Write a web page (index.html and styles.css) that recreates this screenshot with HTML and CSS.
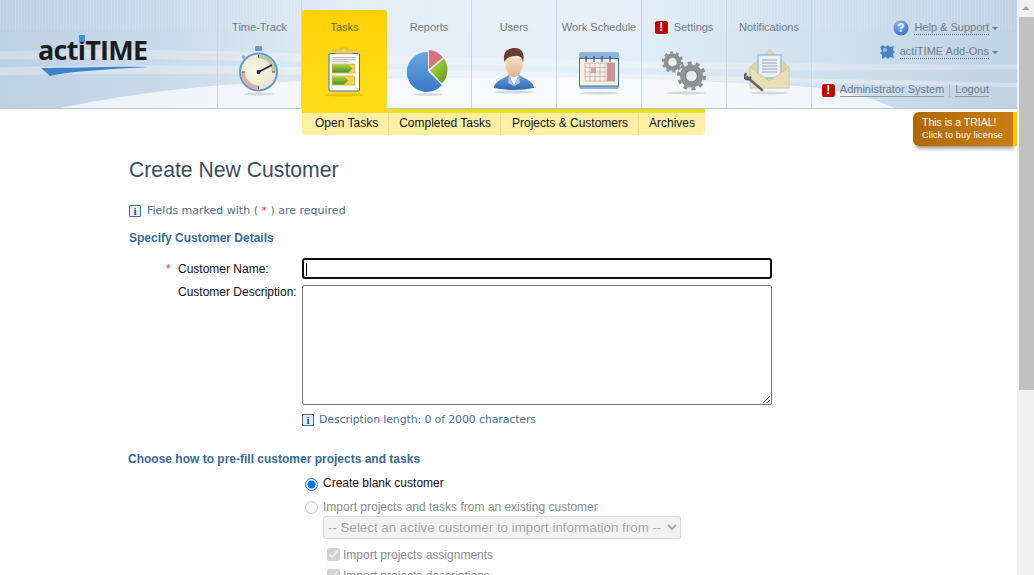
FILE: index.html
```html
<!DOCTYPE html>
<html>
  <head>
    <meta charset="utf-8" />

    <title>actiTIME - Create New Customer</title>

    <link rel="stylesheet" href="styles.css">
  </head>

  <body>
    <div id="app">
      <div class="viewport">
        <div class="topbar">
          <svg class="topbar-waves" viewBox="0 0 1017 109" preserveAspectRatio="none">
            <path d="M0 52 C200 44 500 66 1017 65 V70 C600 74 200 56 0 60 Z" fill="#ffffff" opacity="0.25"/>
            <path d="M0 68 C200 62 480 72 1017 84 V88 C560 78 200 72 0 76 Z" fill="#ffffff" opacity="0.3"/>
            <path d="M60 109 C130 95 200 85 300 82 C500 74 700 80 812 88 C850 92 875 100 895 109 Z" fill="#ffffff" opacity="0.7"/>
          </svg>

          <div class="logo">
            <div class="logo-text">act<span class="logo-i">i</span>TIME</div>
            <svg class="logo-swoosh" width="108" height="11" viewBox="0 0 108 11">
              <path d="M0 2 C30 2 70 0 107 1 C70 3 30 5 9 10 Z" fill="#3d83cf"/>
            </svg>
          </div>

          <nav class="tabs">
            <div class="tab">
              <div class="tab-label">Time-Track</div>
              <svg class="tab-icon" width="50" height="56" viewBox="0 0 50 56">
                <defs>
                  <radialGradient id="face" cx="0.45" cy="0.45" r="0.6">
                    <stop offset="0" stop-color="#fbf9ee"/>
                    <stop offset="1" stop-color="#e6e2c8"/>
                  </radialGradient>
                </defs>
                <ellipse cx="23.5" cy="48" rx="15" ry="1.5" fill="#b8c4d0" opacity="0.6"/>
                <rect x="20" y="0" width="7" height="5" rx="1" fill="#6d94c8"/>
                <circle cx="8.5" cy="11" r="1.8" fill="#8fb0da"/>
                <circle cx="23.5" cy="26" r="18.5" fill="url(#face)" stroke="#6496d2" stroke-width="2"/>
                <path d="M23.5 8.5 A17.5 17.5 0 0 1 41 26 L37 26 A13.5 13.5 0 0 0 23.5 12.5 Z" fill="#b5cc9a"/>
                <path d="M23.5 43.5 A17.5 17.5 0 0 1 6 26 L10 26 A13.5 13.5 0 0 0 23.5 39.5 Z" fill="#dfb0a2"/>
                <path d="M23.5 9v3M23.5 40v3M7 26h3M37 26h3" stroke="#555" stroke-width="1"/>
                <path d="M23.5 26 L37 19" stroke="#222" stroke-width="1.6"/>
                <circle cx="23.5" cy="26" r="2" fill="#222"/>
              </svg>
            </div>
            <div class="tab tab-active">
              <div class="tab-label">Tasks</div>
              <svg class="tab-icon" width="50" height="56" viewBox="0 0 50 56">
                <defs>
                  <linearGradient id="arrow" x1="0" y1="0" x2="0" y2="1">
                    <stop offset="0" stop-color="#a6d64a"/>
                    <stop offset="1" stop-color="#4f9112"/>
                  </linearGradient>
                </defs>
                <ellipse cx="24" cy="49" rx="20" ry="1.5" fill="#c9a400" opacity="0.45"/>
                <rect x="9" y="7.5" width="30.5" height="37.5" rx="1" fill="#fbfbf8" stroke="#3f74c0" stroke-width="1"/>
                <path d="M15.5 7.5 V4 H21 V2 H27 V4 H32.5 V7.5 Z" fill="#eccf63" stroke="#c9a52c" stroke-width="0.5"/>
                <path d="M12.5 11.5h23M12.5 13.5h23M12.5 15.5h17" stroke="#a5a5a5" stroke-width="0.8"/>
                <rect x="12.5" y="18" width="22" height="9" fill="#f7d24a" stroke="#bb9a30" stroke-width="0.6"/>
                <path d="M12.5 18.5 H28.5 L32.5 22.5 L28.5 26.5 H12.5 Z" fill="url(#arrow)"/>
                <rect x="12.5" y="30" width="22" height="9" fill="#f7d24a" stroke="#bb9a30" stroke-width="0.6"/>
                <path d="M12.5 30.5 H24 L28.5 34.5 L24 38.5 H12.5 Z" fill="url(#arrow)"/>
              </svg>
            </div>
            <div class="tab">
              <div class="tab-label">Reports</div>
              <svg class="tab-icon" width="50" height="56" viewBox="0 0 50 56">
                <defs>
                  <linearGradient id="pie-blue" x1="0" y1="0" x2="0" y2="1">
                    <stop offset="0" stop-color="#69a7e6"/>
                    <stop offset="1" stop-color="#3c78c4"/>
                  </linearGradient>
                  <linearGradient id="pie-green" x1="0" y1="0" x2="1" y2="1">
                    <stop offset="0" stop-color="#b4dc50"/>
                    <stop offset="1" stop-color="#5f9a16"/>
                  </linearGradient>
                </defs>
                <ellipse cx="24" cy="48.5" rx="14" ry="1.5" fill="#b8c4d0" opacity="0.6"/>
                <path d="M24 6 V25 L38 39 A20 20 0 1 1 24 6 Z" fill="url(#pie-blue)"/>
                <path d="M25 4 A19 19 0 0 1 39 11.5 L25 23 Z" fill="#d9737a"/>
                <path d="M40 12.5 A20 20 0 0 1 38 37.5 L26 24.5 Z" fill="url(#pie-green)"/>
              </svg>
            </div>
            <div class="tab">
              <div class="tab-label">Users</div>
              <svg class="tab-icon" width="50" height="56" viewBox="0 0 50 56">
                <defs>
                  <linearGradient id="suit" x1="0" y1="0" x2="0" y2="1">
                    <stop offset="0" stop-color="#6b9fdc"/>
                    <stop offset="1" stop-color="#2f66b0"/>
                  </linearGradient>
                  <linearGradient id="skin" x1="0" y1="0" x2="0" y2="1">
                    <stop offset="0" stop-color="#f6dcc0"/>
                    <stop offset="1" stop-color="#dfb48e"/>
                  </linearGradient>
                </defs>
                <ellipse cx="25" cy="46" rx="20" ry="1.5" fill="#b8c4d0" opacity="0.6"/>
                <path d="M5 42 C5 36 13 33 20 29 H30 C37 33 45 36 45 42 Q25 46 5 42 Z" fill="url(#suit)"/>
                <path d="M20 28 L25 40 L30 28 Z" fill="#ffffff"/>
                <path d="M20 29 L25 40 L19 37 Z M30 29 L25 40 L31 37 Z" fill="#a9c8ec"/>
                <path d="M16 12 C16 24 19 31 25 31 C31 31 34 24 34 12 Z" fill="url(#skin)"/>
                <path d="M15.5 16 C13 6 19 2 26 2 C33 2 36 8 34 16 C33 11 30 9 26 10 C22 11 18 10 15.5 16 Z" fill="#6a3d2e"/>
              </svg>
            </div>
            <div class="tab">
              <div class="tab-label">Work Schedule</div>
              <svg class="tab-icon" width="50" height="56" viewBox="0 0 50 56">
                <ellipse cx="25" cy="47" rx="20" ry="1.5" fill="#b8c4d0" opacity="0.6"/>
                <rect x="5" y="6" width="40" height="37" rx="2" fill="#8fb2dc"/>
                <rect x="5.5" y="12.5" width="39" height="27.5" fill="#f4f0e4" stroke="#3d6fb4" stroke-width="1"/>
                <path d="M12 10v6M20 10v6M28 10v6M36 10v6" stroke="#333" stroke-width="1"/>
                <rect x="33" y="17" width="8" height="18" fill="#cf9493"/>
                <rect x="17" y="22" width="5" height="5" fill="#dca7a6"/>
                <path d="M11 17v18M16 17v18M21 17v18M26 17v18M31 17v18M36 17v18M11 17h30M11 21.5h30M11 26h30M11 30.5h30M11 35h30" stroke="#b99" stroke-width="0.6"/>
              </svg>
            </div>
            <div class="tab">
              <div class="tab-label"><span class="alert tab-alert">!</span>Settings</div>
              <svg class="tab-icon" width="50" height="56" viewBox="0 0 50 56">
                <ellipse cx="27" cy="47" rx="20" ry="1.5" fill="#b8c4d0" opacity="0.6"/>
                <g fill="none">
                  <circle cx="13.5" cy="16" r="6.5" stroke="#8f8f8f" stroke-width="4.5"/>
                  <circle cx="13.5" cy="16" r="9.5" stroke="#8f8f8f" stroke-width="2.2" stroke-dasharray="3 3"/>
                  <circle cx="32.5" cy="30" r="8.5" stroke="#929292" stroke-width="6"/>
                  <circle cx="32.5" cy="30" r="13" stroke="#8a8a8a" stroke-width="3" stroke-dasharray="4 4.15"/>
                  <circle cx="32.5" cy="30" r="6" stroke="#6e6e6e" stroke-width="0.8"/>
                </g>
              </svg>
            </div>
            <div class="tab">
              <div class="tab-label">Notifications</div>
              <svg class="tab-icon" width="50" height="56" viewBox="0 0 50 56">
                <ellipse cx="25" cy="47" rx="20" ry="1.5" fill="#b8c4d0" opacity="0.6"/>
                <path d="M6 21 L25.5 4 L45 21 V42 H6 Z" fill="#ded5a8" stroke="#c4ba88" stroke-width="0.5"/>
                <rect x="14" y="9" width="23" height="23" fill="#e9f0f9" stroke="#86a9d6"/>
                <path d="M18 14h15M18 17h15M18 20h15M18 23h15M18 26h15" stroke="#8b98a8" stroke-width="0.9"/>
                <path d="M6 21 L25.5 35 L45 21 V42 H6 Z" fill="#e8dfb6" stroke="#c4ba88" stroke-width="0.5"/>
                <path d="M3 31 L18 44" stroke="#6a6a6a" stroke-width="2.6" stroke-linecap="round"/>
                <circle cx="3.5" cy="30.5" r="3" fill="none" stroke="#5a5a5a" stroke-width="2" stroke-dasharray="13 6"/>
              </svg>
            </div>
          </nav>

          <div class="account">
            <div class="account-menu">
              <svg width="16" height="16" viewBox="0 0 16 16">
                <defs>
                  <radialGradient id="help" cx="0.4" cy="0.3" r="0.8">
                    <stop offset="0" stop-color="#8ab8ee"/>
                    <stop offset="1" stop-color="#2f6cc8"/>
                  </radialGradient>
                </defs>
                <circle cx="8" cy="8" r="7.5" fill="url(#help)"/>
                <text x="8" y="12" class="help-mark">?</text>
              </svg>
              <a class="menu-link">Help &amp; Support</a><span class="caret"></span>
            </div>
            <div class="account-menu">
              <svg class="addons-icon" width="16" height="16" viewBox="0 0 16 16">
                <path d="M1 3 L4 1 L6 3 L9 1 L11 3 L15 2 L14 6 L16 8 L14 10 L15 14 L11 13 L9 15 L7 13 L3 15 L3 11 L1 9 L3 7 Z" fill="#4f82c4"/>
                <circle cx="6" cy="6" r="2" fill="#9fc0e6"/>
              </svg>
              <a class="menu-link">actiTIME Add-Ons</a><span class="caret"></span>
            </div>
            <div class="account-user">
              <span class="alert">!</span>
              <a class="user-link">Administrator System</a>
              <span class="user-sep"></span>
              <a class="user-link">Logout</a>
            </div>
          </div>
        </div>

        <div class="subnav-row">
          <div class="subnav">
            <a>Open Tasks</a>
            <a>Completed Tasks</a>
            <a>Projects &amp; Customers</a>
            <a>Archives</a>
          </div>
          <div class="trial">
            <div class="trial-title">This is a TRIAL!</div>
            <div class="trial-link">Click to buy license</div>
          </div>
        </div>

        <div class="content">
          <h1 class="page-title">Create New Customer</h1>

          <div class="hint hint-required">
            <span class="info-icon">i</span>
            <span>Fields marked with ( <span class="star">*</span> ) are required</span>
          </div>

          <h2 class="section-title">Specify Customer Details</h2>

          <div class="form-grid">
            <label class="field-label field-name"><span class="star">*</span>Customer Name:</label>
            <div class="fake-input"><span class="text-cursor"></span></div>

            <label class="field-label">Customer Description:</label>
            <div>
              <textarea class="description"></textarea>
              <div class="hint hint-length">
                <span class="info-icon">i</span>
                <span>Description length: 0 of 2000 characters</span>
              </div>
            </div>
          </div>

          <h2 class="section-title section-prefill">Choose how to pre-fill customer projects and tasks</h2>

          <div class="prefill">
            <label class="option option-first"><input type="radio" name="prefill" checked>Create blank customer</label>
            <label class="option option-disabled"><input type="radio" name="prefill" disabled>Import projects and tasks from an existing customer</label>
            <select class="customer-select" disabled>
              <option>-- Select an active customer to import information from --</option>
            </select>
            <label class="check option-disabled"><input type="checkbox" checked disabled>Import projects assignments</label>
            <label class="check option-disabled"><input type="checkbox" checked disabled>Import projects descriptions</label>
          </div>
        </div>
      </div>

      <div class="scrollbar">
        <div class="scroll-arrow"></div>
        <div class="scroll-thumb"></div>
      </div>
    </div>
  </body>
</html>
```

FILE: styles.css
```css
html,
body {
  margin: 0;
  height: 100%;
  overflow: hidden;
}
body {
  font-family: 'Liberation Sans', Arial, sans-serif;
  font-size: 12px;
  color: #111;
  background-color: white;
}
#app {
  display: flex;
  height: 575px;
}
.viewport {
  flex: 1;
  min-width: 0;
  overflow: hidden;
}
.scrollbar {
  width: 17px;
  flex: none;
  background-color: #f1f1f1;
  display: flex;
  flex-direction: column;
}
.scroll-arrow {
  height: 17px;
  position: relative;
}
.scroll-arrow::after {
  content: '';
  position: absolute;
  left: 5px;
  top: 6px;
  border-left: 4px solid transparent;
  border-right: 4px solid transparent;
  border-bottom: 4px solid #a3a3a3;
}
.scroll-thumb {
  height: 373px;
  margin-left: 2px;
  background-color: #c1c1c1;
}

/* header */
.topbar {
  display: flex;
  height: 109px;
  position: relative;
  background:
    repeating-linear-gradient(90deg, rgba(255, 255, 255, 0.12) 0 1px, transparent 1px 3px) top / 100% 30px no-repeat,
    linear-gradient(90deg, #bdd0e2 0, #c9d9e9 15%, #e3edf6 35%, #e6f0f9 58%, #d3e2ef 78%, #bfd2e3 100%);
  border-bottom: 1px solid #b4c8dd;
  box-sizing: border-box;
}
.topbar-waves {
  position: absolute;
  top: 0;
  left: 0;
  width: 100%;
  height: 100%;
}
.logo {
  width: 217px;
  flex: none;
  padding: 34px 0 0 38px;
  box-sizing: border-box;
  position: relative;
}
.logo-text {
  font-family: 'Open Sans', 'DejaVu Sans', sans-serif;
  font-size: 27px;
  font-weight: 700;
  line-height: 32px;
  color: #1c1c1c;
  letter-spacing: -0.75px;
}
.logo-i {
  display: inline-block;
  position: relative;
}
.logo-i::before {
  content: '';
  position: absolute;
  left: 1px;
  top: 1px;
  width: 6px;
  height: 7px;
  background-color: #3b93d8;
}
.logo-swoosh {
  display: block;
  margin: 0 0 0 3px;
}
.tabs {
  display: flex;
  position: relative;
}
.tab {
  width: 85px;
  height: 108px;
  box-sizing: border-box;
  padding-top: 20px;
  text-align: center;
  font-size: 11px;
  color: #6d7a8a;
  border-right: 1px solid #c9d6e8;
}
.tab:first-child {
  border-left: 1px solid #c9d6e8;
  width: 85px;
}
.tab-label {
  height: 14px;
  line-height: 14px;
  white-space: nowrap;
}
.tab-icon {
  display: block;
  margin: 12px auto 0;
}
.tab-active {
  height: 103px;
  margin-top: 10px;
  padding-top: 10px;
  color: #6e6a24;
  border-right: 0;
  border-radius: 3px 3px 0 0;
  background: linear-gradient(#ffd207, #ffdd17);
}
.alert {
  display: inline-block;
  width: 13px;
  height: 13px;
  line-height: 13px;
  border-radius: 2px;
  background-color: #c40000;
  box-shadow: 0 0 0 1px #fff;
  color: white;
  font-weight: 700;
  font-size: 12px;
  text-align: center;
}
.tab-alert {
  margin-right: 6px;
}
.account {
  flex: 1;
  position: relative;
  padding: 20px 19px 0 0;
  font-size: 11px;
  color: #6d7a8a;
}
.account-menu {
  display: flex;
  align-items: center;
  justify-content: flex-end;
  height: 16px;
  margin-bottom: 8px;
}
.account-menu svg {
  margin-right: 5px;
}
.help-mark {
  font-family: 'Liberation Sans', Arial, sans-serif;
  font-size: 12px;
  font-weight: 700;
  fill: white;
  text-anchor: middle;
}
.menu-link {
  border-bottom: 1px dotted #56687a;
  line-height: 13px;
}
.caret {
  width: 0;
  height: 0;
  margin: 0 0 0 3px;
  border-left: 3px solid transparent;
  border-right: 3px solid transparent;
  border-top: 3px solid #6d7a8a;
}
.account-user {
  display: flex;
  align-items: center;
  justify-content: flex-end;
  margin-top: 23px;
  padding-right: 9px;
  white-space: nowrap;
}
.account-user .alert {
  margin-right: 5px;
}
.user-link {
  border-bottom: 1px solid #8d99a7;
  line-height: 13px;
}
.user-sep {
  width: 1px;
  height: 13px;
  margin: 0 5px;
  background-color: #a7b4c2;
}

/* second level menu */
.subnav-row {
  display: flex;
  position: relative;
  height: 26px;
  padding-left: 302px;
}
.subnav {
  display: flex;
  height: 22px;
  padding-top: 4px;
  border-radius: 0 0 4px 4px;
  background: linear-gradient(#ffdc17 0, #ffdc17 4px, #fdf0a6 4px);
}
.subnav a {
  padding: 0 9.5px 0 10.5px;
  line-height: 20px;
  color: #111;
  white-space: nowrap;
  border-right: 1px solid #f3dc86;
}
.subnav a:first-child {
  padding-left: 13px;
}
.subnav a:last-child {
  padding-right: 10px;
  border-right: 0;
}
.trial {
  position: absolute;
  top: 3px;
  right: 0;
  width: 104px;
  height: 34px;
  padding: 4px 0 0 9px;
  border-right: 4px solid #ffc800;
  border-radius: 6px 0 0 6px;
  box-sizing: border-box;
  color: white;
  background: linear-gradient(90deg, #ad6a04, #c97d10);
  box-shadow: 0 5px 4px -3px #8f8672;
}
.trial-title {
  line-height: 13px;
  font-size: 10.5px;
}
.trial-link {
  line-height: 12px;
  font-size: 9px;
  letter-spacing: 0.2px;
}

/* form */
.content {
  padding-left: 129px;
}
.page-title {
  margin: 23px 0 0;
  font-size: 21.2px;
  font-weight: 400;
  line-height: 24px;
  color: #3c4d60;
}
.hint {
  display: flex;
  align-items: center;
  font-family: 'DejaVu Sans', Verdana, sans-serif;
  font-size: 11px;
  line-height: 14px;
  color: #4d6d8c;
}
.hint-required {
  margin-top: 22px;
}
.hint-length {
  margin-top: 8px;
  letter-spacing: -0.15px;
}
.hint-length .info-icon {
  margin-right: 5px;
}
.info-icon {
  width: 10px;
  height: 10px;
  margin-right: 6px;
  border: 1px solid #40709f;
  border-radius: 1px;
  background-color: #e6eef7;
  color: #1d4f86;
  font-family: 'Liberation Serif', serif;
  font-size: 11px;
  font-weight: 700;
  line-height: 10px;
  text-align: center;
}
.star {
  color: #e8372b;
}
.section-title {
  margin: 13px 0 0;
  font-size: 12px;
  line-height: 14px;
  font-weight: 700;
  color: #386a9a;
}
.section-prefill {
  margin-top: 25px;
  margin-left: -1px;
}
.form-grid {
  display: grid;
  grid-template-columns: 173px 470px;
  grid-row-gap: 6px;
  margin-top: 13px;
}
.field-label {
  padding: 0 0 0 49px;
  line-height: 14px;
  position: relative;
  white-space: nowrap;
}
.field-name {
  padding-top: 4px;
}
.field-name .star {
  position: absolute;
  left: 37px;
}
.fake-input {
  height: 21px;
  box-sizing: border-box;
  border: 2px solid #101010;
  border-radius: 3px;
  padding: 3px 0 0 2px;
}
.text-cursor {
  display: block;
  width: 1px;
  height: 13px;
  background-color: #000;
}
.description {
  display: block;
  width: 470px;
  height: 120px;
  margin: 0;
  padding: 2px;
  box-sizing: border-box;
  border: 1px solid #767676;
  border-radius: 2px;
}
.prefill {
  display: flex;
  flex-direction: column;
  align-items: flex-start;
  margin: 5px 0 0 176px;
}
.option {
  display: flex;
  align-items: center;
  height: 23px;
}
.option-first {
  height: 24px;
}
.option input {
  width: 13px;
  height: 13px;
  margin: 2px 5px 0 0;
  accent-color: #0075ff;
}
.check {
  display: flex;
  align-items: center;
  height: 21px;
  margin-left: 22px;
}
.check input {
  width: 13px;
  height: 13px;
  margin: 0 3px 0 0;
}
.option-disabled {
  color: #8c8c8c;
}
.customer-select {
  width: 358px;
  height: 23px;
  margin: -2px 0 5px 18px;
  font-family: 'Liberation Sans', Arial, sans-serif;
  font-size: 13.33px;
  border-radius: 3px;
}
```
